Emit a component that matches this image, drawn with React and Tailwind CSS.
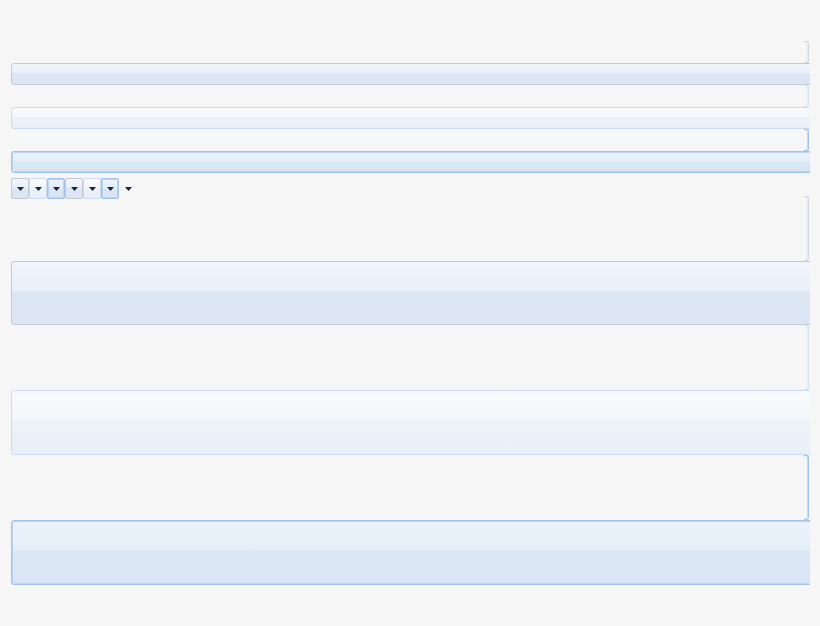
import React from 'react';

const looks = {
  normal:
    'border-[#c3c9d1] bg-[linear-gradient(to_bottom,#f1f5fb_0%,#eaf0f9_46%,#dde7f4_46%,#dbe5f3_100%)]',
  hover:
    'border-[#c8dcf3] bg-[linear-gradient(to_bottom,#f9fafc_0%,#f3f6fa_46%,#edf2f9_46%,#ebf0f8_100%)]',
  pressed:
    'border-[#9fc3ee] shadow-[inset_0_0_0_1px_#b9d5f4] bg-[linear-gradient(to_bottom,#ebf2fb_0%,#e6eefa_46%,#dce7f5_46%,#d9e4f4_100%)]',
};

const edgeLooks = {
  normal: 'border-[#cfd6df] shadow-[inset_-1px_0_0_#e4e9ef]',
  hover: 'border-[#d3e2f3] shadow-[inset_-1px_0_0_#e6eef8]',
  pressed: 'border-[#9fc3ee] shadow-[inset_-1px_0_0_#c2daf5]',
};

// right-hand end of a flat button, the body is transparent
function Edge({ look = 'normal', h }) {
  return (
    <div className={`flex justify-end ${h}`}>
      <div className={`mr-[1px] h-full w-[5px] rounded-r-[3px] border-y border-r ${edgeLooks[look]}`} />
    </div>
  );
}

function Bar({ look = 'normal', h }) {
  return <div className={`w-[830px] shrink-0 rounded-[3px] border ${looks[look]} ${h}`} />;
}

function Arrow() {
  return (
    <svg width="7" height="4" viewBox="0 0 7 4">
      <path d="M0 0h7L3.5 4z" fill="#17273b" />
    </svg>
  );
}

function Drop({ look }) {
  if (!look) {
    return (
      <div className="flex h-[21px] w-[18px] items-center justify-center">
        <Arrow />
      </div>
    );
  }
  return (
    <div className={`flex h-[21px] w-[18px] items-center justify-center rounded-[2px] border ${looks[look]}`}>
      <Arrow />
    </div>
  );
}

export default function App() {
  return (
    <div className="h-[626px] w-[820px] overflow-hidden bg-[#f6f6f6] pl-[11px] pt-[41px]">
      <div className="flex w-[799px] flex-col overflow-hidden">
        <Edge h="h-[22px]" />
        <Bar h="h-[22px]" />
        <Edge look="hover" h="h-[22px]" />
        <Bar look="hover" h="h-[22px]" />
        <Edge look="pressed" h="h-[22px]" />
        <Bar look="pressed" h="h-[22px]" />

        <div className="mt-[5px] flex">
          <Drop look="normal" />
          <Drop look="hover" />
          <Drop look="pressed" />
          <Drop look="normal" />
          <Drop look="hover" />
          <Drop look="pressed" />
          <Drop />
        </div>

        <div className="-mt-[3px]">
          <Edge h="h-[65px]" />
        </div>
        <Bar h="h-[64px]" />
        <Edge look="hover" h="h-[65px]" />
        <Bar look="hover" h="h-[65px]" />
        <Edge look="pressed" h="h-[65px]" />
        <Bar look="pressed" h="h-[65px]" />
      </div>
    </div>
  );
}
